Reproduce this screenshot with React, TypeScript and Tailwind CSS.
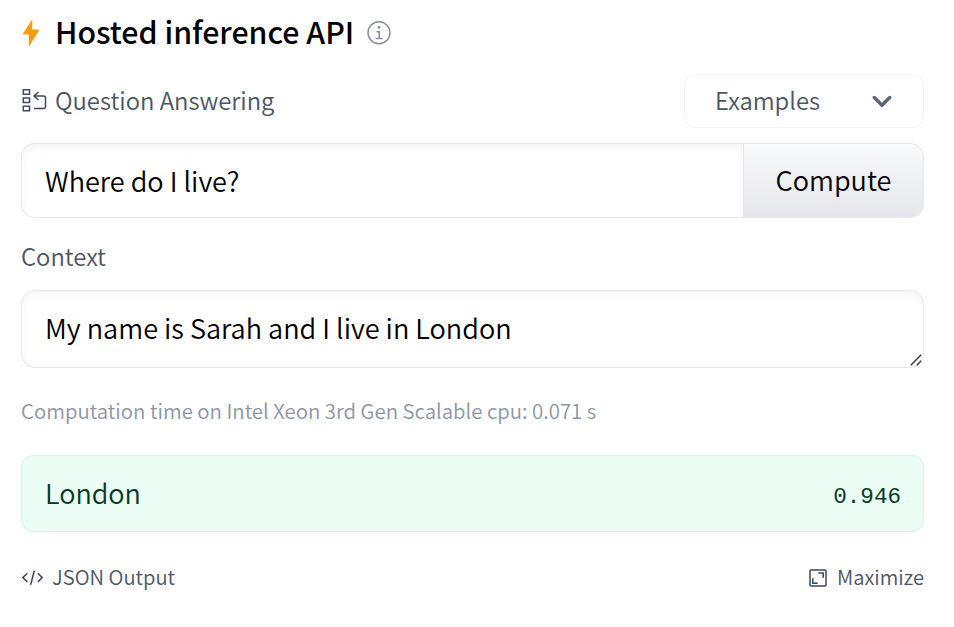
function BoltIcon() {
  return (
    <svg viewBox="0 0 18 28" className="h-7 w-[18px] shrink-0" fill="#f99d0b">
      <path d="M10.3 0 .5 15.6h6.2L6.9 28 17.5 10.6h-7.2z" />
    </svg>
  );
}

function InfoIcon() {
  return (
    <svg viewBox="0 0 24 24" className="h-6 w-6 shrink-0" fill="none" stroke="#868e9f" strokeWidth="1.5">
      <circle cx="12" cy="11.7" r="11" />
      <path d="M9.5 10.7h2.7v7M8.7 17.4h7" />
      <circle cx="12" cy="6.4" r="1.3" fill="#868e9f" stroke="none" />
    </svg>
  );
}

function TaskIcon() {
  return (
    <svg viewBox="0 0 26 24" className="h-6 w-[26px] shrink-0 -translate-y-px" fill="none" stroke="#3d4a60" strokeWidth="1.5">
      <path d="M2.3 1.8h6.2v4.4H2.3zM2.3 10.1h6.2v4.4H2.3zM2.3 18.3h6.2v4.4H2.3zM17.5 4 13 8l4.5 4M13 8h9.5q2 0 2 2v8.5q0 2-2 2H13" />
    </svg>
  );
}

function CodeIcon() {
  return (
    <svg viewBox="0 0 22 16" className="h-4 w-[22px] shrink-0" fill="none" stroke="#38455b" strokeWidth="1.5">
      <path d="M6.3 3.3 1.8 7.6l4.5 4.3M16.9 3.3l4.3 4.3-4.3 4.3M13.3.6 9.7 14.8" />
    </svg>
  );
}

function MaximizeIcon() {
  return (
    <svg viewBox="0 0 18 18" className="h-[18px] w-[18px] shrink-0" fill="none" stroke="#38455b" strokeWidth="1.5">
      <rect x="1" y="1" width="16" height="16" rx="1" />
      <path d="M9.3 4h4.9v4.7M3.8 9.3v4.9h4.9" />
    </svg>
  );
}

export default function App() {
  return (
    <main className="h-[627px] w-[954px] overflow-hidden bg-white pl-[21px] pr-[30px] font-['Noto_Sans_CJK_SC',sans-serif] font-[350] text-black">
      <h2 className="flex h-[66px] items-center pl-px text-[30.3px] leading-[40px] font-medium">
        <BoltIcon />
        <span className="ml-[15px] mr-[13px] -mt-1">Hosted inference API</span>
        <InfoIcon />
      </h2>
      <div className="mt-2 flex h-[54px] items-center justify-between text-[23.8px] leading-8 text-[#4b5563]">
        <div className="flex items-center">
          <TaskIcon />
          <span className="ml-2 -mt-0.5">Question Answering</span>
        </div>
        <button className="flex h-[54px] w-[240px] items-center justify-between rounded-[12px] border border-[#f3f4f6] pl-[30px] pr-[31px]">
          <span className="-mt-0.5">Examples</span>
          <svg viewBox="0 0 20 13" className="h-[13px] w-5" fill="none" stroke="#5b6478" strokeWidth="3.4" strokeLinecap="round" strokeLinejoin="round">
            <path d="m2.3 2.5 7.7 7.7 7.7-7.7" />
          </svg>
        </button>
      </div>
      <div className="mt-[15px] flex h-[75px] text-[27.1px] leading-9">
        <div className="flex flex-1 items-center rounded-l-[14px] border border-r-0 border-[#e5e7eb] pl-[23px] shadow-[inset_0_4px_8px_rgba(0,0,0,0.04)]">
          <span>Where do I live?</span>
        </div>
        <button className="flex w-[181px] items-center justify-center rounded-r-[14px] border border-[#e5e7eb] bg-linear-to-b from-[#f9fafb] to-[#e5e6eb]">
          <span className="-mt-0.5">Compute</span>
        </button>
      </div>
      <div className="flex h-[72px] items-center pt-[4px] text-[23.8px] text-[#4b5563]">
        <span>Context</span>
      </div>
      <div className="flex h-[78px] items-center justify-between rounded-[14px] border border-[#e5e7eb] pl-[23px] text-[27.1px] leading-9 shadow-[inset_0_4px_8px_rgba(0,0,0,0.04)]">
        <span className="-mt-0.5">My name is Sarah and I live in London</span>
        <svg viewBox="0 0 12 12" className="mr-px mb-px h-3 w-3 self-end" stroke="#404044" strokeWidth="1.5">
          <path d="M.8 11.2 11.2.8M6.8 11.2l4.4-4.4" />
        </svg>
      </div>
      <div className="flex h-[87px] items-center pb-[3px] text-[20.38px] text-[#8d95a4]">
        <span>Computation time on Intel Xeon 3rd Gen Scalable cpu: 0.071 s</span>
      </div>
      <div className="flex h-[77px] items-center justify-between rounded-[12px] border border-[#d1f5e5] bg-[#ecfdf5] pl-[23px] pr-[22px] text-[27px] leading-9 text-[#053a22]">
        <span className="-mt-0.5">London</span>
        <span className="mt-[7px] font-['Liberation_Mono',monospace] text-[22.6px] font-normal">0.946</span>
      </div>
      <div className="flex h-[92px] items-center justify-between text-[20.2px] text-[#4b5563]">
        <div className="flex items-center">
          <CodeIcon />
          <span className="ml-[9px] -mt-0.5">JSON Output</span>
        </div>
        <div className="flex items-center">
          <MaximizeIcon />
          <span className="ml-[10px] -mt-0.5">Maximize</span>
        </div>
      </div>
    </main>
  );
}
